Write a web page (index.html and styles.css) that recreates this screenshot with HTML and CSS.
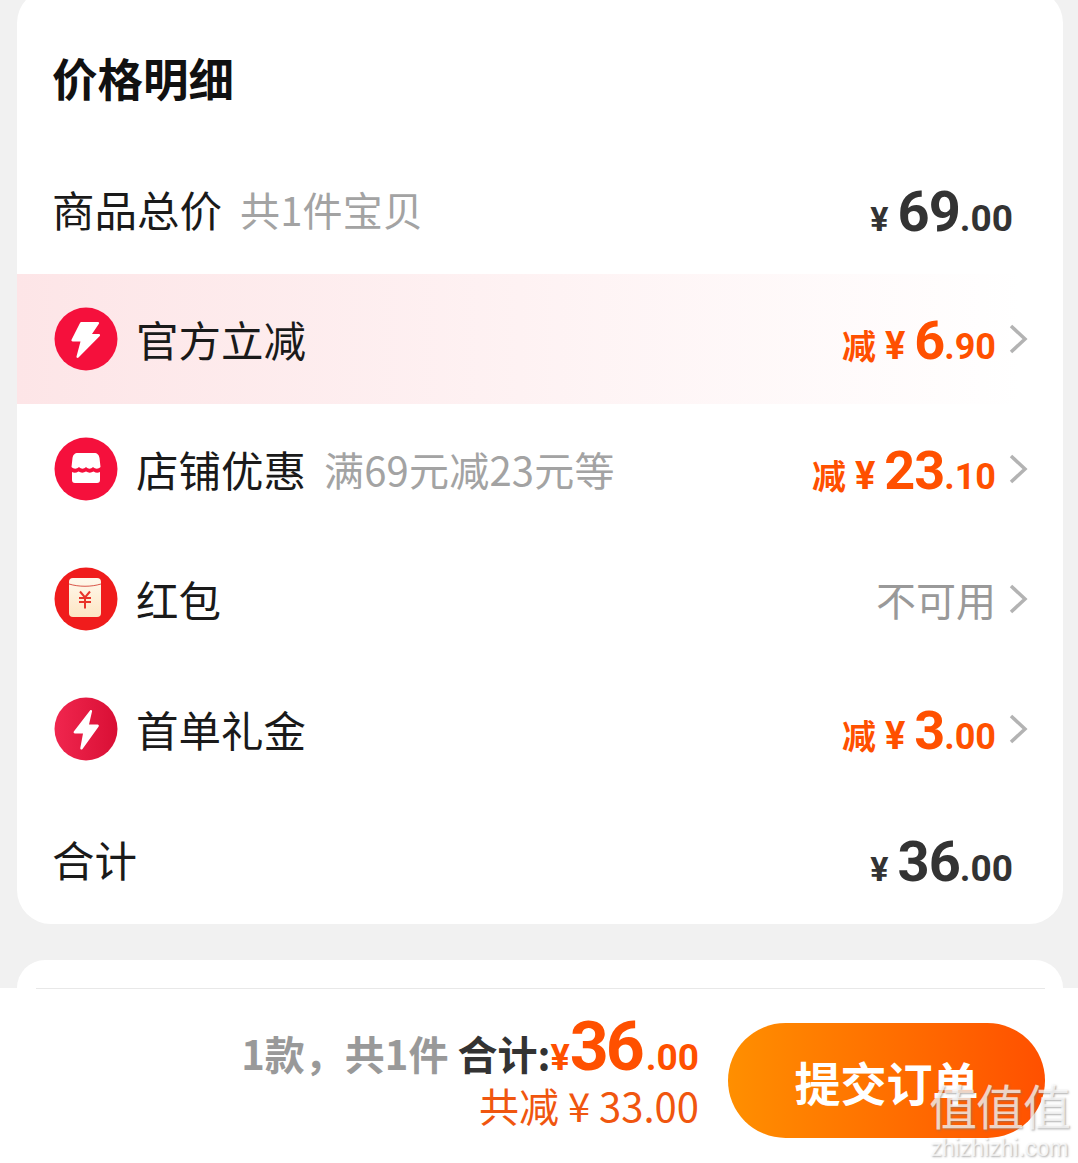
FILE: index.html
```html
<!DOCTYPE html>
<html lang="zh-CN">
<head>
    <meta charset="UTF-8">
    <meta name="viewport" content="width=device-width, initial-scale=1.0">
    <title>价格明细</title>
    <link rel="stylesheet" href="styles.css">
</head>
<body>
    <div class="page">
        <div class="card">
            <h2 class="card-title">价格明细</h2>

            <div class="row row-plain">
                <div class="row-left">
                    <span class="row-name">商品总价</span>
                    <span class="row-note">共1件宝贝</span>
                </div>
                <div class="price price-dark">
                    <span class="yen">¥</span><span class="big">69</span><span class="small">.00</span>
                </div>
            </div>

            <div class="row row-hot">
                <div class="row-left">
                    <svg class="icon" viewBox="0 0 64 64">
                        <circle cx="32" cy="32" r="31.5" fill="#f5103c"/>
                        <path d="M28 15h16c1 0 1.500 1 .9 1.800L38 27h7c1 0 1.500 1.100.8 1.900L24.500 50.500c-1 1-2.300.2-2-1l4-15h-7.800c-.9 0-1.500-.8-1.200-1.700l8.500-16.800c.3-.6 1-1 2-1z" fill="#fff"/>
                    </svg>
                    <span class="row-name">官方立减</span>
                </div>
                <div class="row-right">
                    <div class="price price-orange">
                        <span class="cut">减</span><span class="yen">¥</span><span class="big">6</span><span class="small">.90</span>
                    </div>
                    <svg class="arrow" viewBox="0 0 20 32"><path d="M3 3l14 13L3 29" fill="none" stroke="#b3b3b3" stroke-width="3.500"/></svg>
                </div>
            </div>

            <div class="row">
                <div class="row-left">
                    <svg class="icon" viewBox="0 0 64 64">
                        <circle cx="32" cy="32" r="31.5" fill="#f5103c"/>
                        <path d="M24 16h16c3.500 0 5 2 5.500 5l1 9c-2.300 2.300-5 2.300-7.500 0-2.300 2.300-4.700 2.300-7 0-2.300 2.300-4.700 2.300-7 0-2.500 2.300-5.200 2.300-7.500 0l1-9c.5-3 2-5 5.500-5z" fill="#fff"/>
                        <path d="M18 35c2 1 4 1 6.500-.5 2.500 1.500 5 1.500 7.500 0 2.500 1.500 5 1.500 7.500 0 2.500 1.500 4.500 1.500 6.500.5v8c0 2-1 3-3 3H21c-2 0-3-1-3-3z" fill="#fff"/>
                    </svg>
                    <span class="row-name">店铺优惠</span>
                    <span class="row-note">满69元减23元等</span>
                </div>
                <div class="row-right">
                    <div class="price price-orange">
                        <span class="cut">减</span><span class="yen">¥</span><span class="big">23</span><span class="small">.10</span>
                    </div>
                    <svg class="arrow" viewBox="0 0 20 32"><path d="M3 3l14 13L3 29" fill="none" stroke="#b3b3b3" stroke-width="3.500"/></svg>
                </div>
            </div>

            <div class="row">
                <div class="row-left">
                    <svg class="icon" viewBox="0 0 64 64">
                        <defs>
                            <linearGradient id="envelope" x1="0" y1="0" x2="0" y2="1">
                                <stop offset="0" stop-color="#fff8ec"/>
                                <stop offset="1" stop-color="#fde6c4"/>
                            </linearGradient>
                        </defs>
                        <circle cx="32" cy="32" r="31.500" fill="#f01c1c"/>
                        <rect x="15" y="11" width="32" height="39" rx="4" fill="url(#envelope)"/>
                        <path d="M15 17c10 3 22 3 32 0" fill="none" stroke="#d9564a" stroke-width="1"/>
                        <path d="M26 24.500l5 6 5-6M25 31h12M25 35h12M31 30.500v11" fill="none" stroke="#e8342a" stroke-width="2"/>
                    </svg>
                    <span class="row-name">红包</span>
                </div>
                <div class="row-right">
                    <span class="unavailable">不可用</span>
                    <svg class="arrow" viewBox="0 0 20 32"><path d="M3 3l14 13L3 29" fill="none" stroke="#b3b3b3" stroke-width="3.500"/></svg>
                </div>
            </div>

            <div class="row">
                <div class="row-left">
                    <svg class="icon" viewBox="0 0 64 64">
                        <defs>
                            <linearGradient id="boltBg" x1="0" y1="0" x2="1" y2="0">
                                <stop offset="0" stop-color="#f0264e"/>
                                <stop offset="1" stop-color="#d90f35"/>
                            </linearGradient>
                        </defs>
                        <circle cx="32" cy="32" r="31.500" fill="url(#boltBg)"/>
                        <path d="M36 13.500c1-.9 2.300-.2 2 1.100L35 27.500h8.500c1.200 0 1.800 1.300 1 2.200L28.500 52c-1 1.100-2.500.3-2.200-1l2.700-14.500h-8c-1.200 0-1.900-1.400-1-2.300z" fill="#fff"/>
                    </svg>
                    <span class="row-name">首单礼金</span>
                </div>
                <div class="row-right">
                    <div class="price price-orange">
                        <span class="cut">减</span><span class="yen">¥</span><span class="big">3</span><span class="small">.00</span>
                    </div>
                    <svg class="arrow" viewBox="0 0 20 32"><path d="M3 3l14 13L3 29" fill="none" stroke="#b3b3b3" stroke-width="3.500"/></svg>
                </div>
            </div>

            <div class="row row-plain">
                <div class="row-left">
                    <span class="row-name">合计</span>
                </div>
                <div class="price price-dark">
                    <span class="yen">¥</span><span class="big">36</span><span class="small">.00</span>
                </div>
            </div>
        </div>

        <div class="card card-next"></div>

        <div class="bottom-bar">
            <div class="summary">
                <div class="summary-top">
                    <span class="count">1款，共1件</span>
                    <span class="total-label">合计:</span>
                    <span class="total-price"><span class="yen">¥</span><span class="big">36</span><span class="small">.00</span></span>
                </div>
                <div class="summary-cut">共减 ¥ 33.00</div>
            </div>
            <button class="submit">提交订单</button>
        </div>

        <!-- 水印 -->
        <div class="watermark">
            <div class="wm-mark">值值值</div>
            <div class="wm-url">zhizhizhi.com</div>
        </div>
    </div>
</body>
</html>
```

FILE: styles.css
```css
* {
    box-sizing: border-box;
}
body {
    margin: 0;
    padding: 0;
    background-color: #f1f1f1;
    font-family: "Noto Sans CJK SC", "Noto Sans", sans-serif;
}
.page {
    position: relative;
    height: 1163px;
    overflow: hidden;
}
.card {
    margin: -11px 15px 0 17px;
    background-color: white;
    border-radius: 34px;
}
.card-title {
    margin: 0;
    padding: 58px 35px 0;
    height: 155px;
    font-size: 45.500px;
    line-height: 60px;
    font-weight: 700;
    color: #111;
}
.row {
    height: 130px;
    padding: 0 35px 0 37px;
    display: flex;
    align-items: center;
    justify-content: space-between;
}
.row-plain {
    padding: 0 50px 0 35px;
}
.row-hot {
    background: linear-gradient(90deg, #fde5e7 0%, #fff 96%);
}
.row-left {
    display: flex;
    align-items: center;
}
.row-right {
    display: flex;
    align-items: center;
    gap: 12px;
}
.icon {
    width: 64px;
    height: 64px;
    margin-right: 18px;
    flex-shrink: 0;
}
.row-name {
    font-size: 42.500px;
    color: #1a1a1a;
    line-height: 60px;
}
.row-note {
    margin-left: 18px;
    font-size: 40px;
    letter-spacing: 0.2px;
    color: #a3a3a3;
    line-height: 60px;
}
.price {
    display: flex;
    align-items: baseline;
    padding-top: 6px;
    font-family: Roboto, "Noto Sans CJK SC", sans-serif;
    font-weight: 700;
}
.price .yen {
    font-size: 34px;
    margin-right: 9px;
}
.price .big {
    font-size: 56px;
    letter-spacing: -1px;
}
.price .small {
    font-size: 37px;
}
.price-dark {
    color: #333;
}
.price-orange {
    color: #ff5000;
    padding-top: 3px;
}
.price-orange .yen {
    font-size: 38px;
}
.price-orange .big {
    font-size: 54px;
}
.price-orange .small {
    font-size: 36px;
}
.cut {
    font-size: 34px;
    margin-right: 9px;
}
.arrow {
    width: 20px;
    height: 32px;
}
.unavailable {
    font-size: 40px;
    color: #999;
}
.card-next {
    margin-top: 36px;
    height: 28px;
    border-radius: 34px 34px 0 0;
}
.bottom-bar {
    height: 175px;
    background-color: white;
    padding: 19px 33px 0 0;
    display: flex;
    justify-content: flex-end;
    position: relative;
}
.bottom-bar::before {
    content: "";
    position: absolute;
    top: 0;
    left: 36px;
    right: 33px;
    height: 1px;
    background-color: #e8e8e8;
}
.summary {
    margin-right: 29px;
    display: flex;
    flex-direction: column;
    align-items: flex-end;
}
.summary-top {
    display: flex;
    align-items: baseline;
    height: 73px;
}
.count {
    font-size: 40px;
    font-weight: 700;
    color: #999;
    margin-right: 9px;
}
.total-label {
    font-size: 40px;
    font-weight: 700;
    color: #333;
}
.total-price {
    color: #ff5000;
    font-family: Roboto, sans-serif;
    font-weight: 700;
}
.total-price .yen {
    font-size: 36px;
}
.total-price .big {
    font-size: 68px;
    letter-spacing: -3px;
    margin-right: 4px;
}
.total-price .small {
    font-size: 37px;
}
.summary-cut {
    font-size: 40px;
    line-height: 50px;
    color: #f0560f;
}
.submit {
    width: 317px;
    height: 115px;
    margin-top: 16px;
    border: none;
    border-radius: 58px;
    background: linear-gradient(90deg, #ff8f00 0%, #ff5000 100%);
    color: white;
    font-family: "Noto Sans CJK SC", sans-serif;
    font-size: 46px;
    font-weight: 700;
}
.watermark {
    position: absolute;
    right: 8px;
    bottom: 4px;
    text-align: center;
    color: rgba(255, 255, 255, 0.72);
    text-shadow: 1px 1px 2px rgba(120, 120, 120, 0.6);
}
.wm-mark {
    font-size: 48px;
    line-height: 50px;
    letter-spacing: -1px;
    margin-bottom: 8px;
}
.wm-url {
    font-family: "Liberation Sans", sans-serif;
    font-size: 23px;
    line-height: 22px;
}
```
